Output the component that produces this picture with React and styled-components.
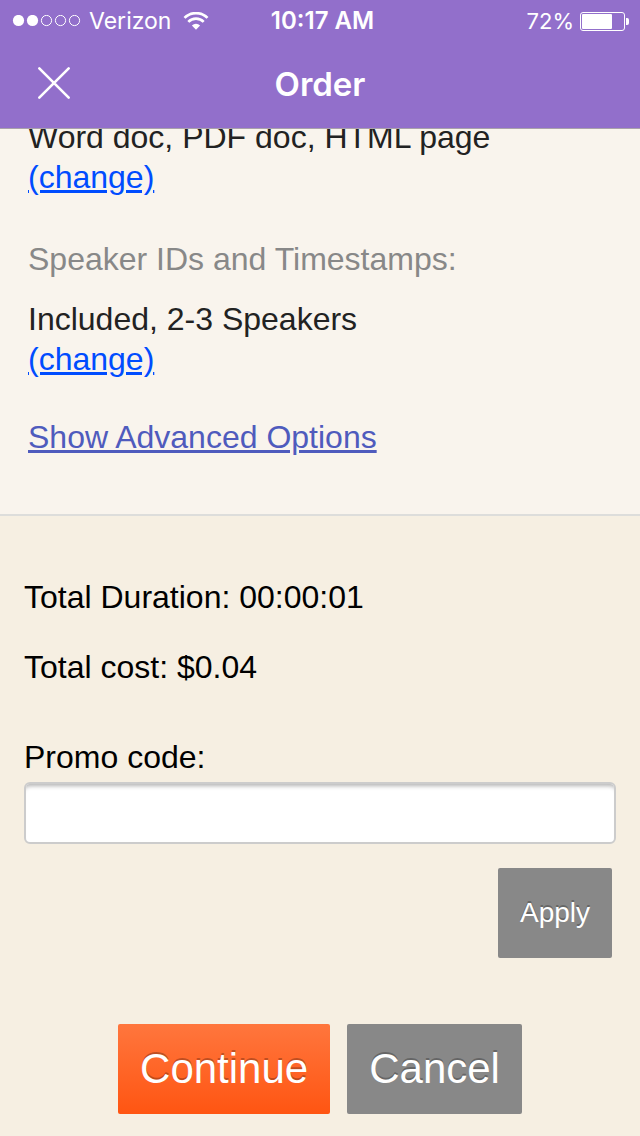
import React from "react";
import styled, { createGlobalStyle } from "styled-components";

const GlobalStyle = createGlobalStyle`
  * {
    box-sizing: border-box;
  }
  body {
    margin: 0;
    background-color: #f6efe2;
    font-family: "Liberation Sans", Arial, sans-serif;
    font-size: 32px;
    line-height: 40px;
    color: #000;
  }
`;

const Header = styled.header`
  position: sticky;
  top: 0;
  z-index: 1;
  background-color: #926fcb;
  border-bottom: 1px solid #a9a1ab;
  color: white;
  font-family: Inter, sans-serif;
`;

const StatusBar = styled.div`
  display: grid;
  grid-template-columns: 1fr auto 1fr;
  align-items: center;
  height: 42px;
  padding: 0 11px 0 12px;
  font-size: 23px;
`;

const StatusGroup = styled.div`
  display: flex;
  align-items: center;
  justify-content: ${props => (props.$end ? "flex-end" : "flex-start")};
  gap: ${props => (props.$end ? "6px" : "8px")};
`;

const Carrier = styled.span`
  padding-right: 4px;
`;

const Battery = styled.span`
  font-size: 22px;
`;

const Time = styled.span`
  padding-left: 4px;
  font-size: 24px;
  font-weight: 600;
`;

const NavBar = styled.div`
  display: grid;
  grid-template-columns: 1fr auto 1fr;
  align-items: center;
  height: 86px;
  padding: 0 36px 4px;
`;

const CloseButton = styled.button`
  display: flex;
  justify-self: start;
  padding: 0;
  border: none;
  background: none;
  color: inherit;
  cursor: pointer;
`;

const Title = styled.h1`
  margin: 0;
  padding-top: 2px;
  font-size: 33px;
  font-weight: 600;
`;

/* scrolled up a little, the first line sits partly under the header */
const Options = styled.section`
  margin-top: -12px;
  padding: 0 28px 57px;
  background-color: #f9f4ed;
  border-bottom: 2px solid #dddddb;
`;

const OptionLabel = styled.h2`
  margin: 42px 0 20px;
  font-size: 32px;
  font-weight: normal;
  color: #888;
`;

const OptionValue = styled.div`
  color: #222;
`;

const ChangeLink = styled.a`
  color: #004cff;
`;

const AdvancedLink = styled.a`
  display: inline-block;
  margin-top: 38px;
  color: #4f5bbd;
`;

const Summary = styled.form`
  display: flex;
  flex-direction: column;
  padding: 61px 24px 22px;
`;

const Total = styled.p`
  margin: 0 0 30px;
`;

const PromoLabel = styled.label`
  margin: 20px 0 5px;
`;

const PromoInput = styled.input`
  width: 100%;
  height: 62px;
  padding: 0 12px;
  border: 2px solid #ccc;
  border-radius: 6px;
  background-color: white;
  box-shadow: inset 0 6px 4px -4px rgba(0, 0, 0, 0.3);
  font: inherit;
`;

const Button = styled.button`
  height: 90px;
  padding: 0 22px;
  border: none;
  border-radius: 2px;
  background: ${props =>
    props.$primary ? "linear-gradient(#ff763d, #ff5512)" : "#888"};
  color: white;
  font-family: inherit;
  font-size: ${props => (props.$small ? "28px" : "42px")};
  text-shadow: 0 -2px 0 rgba(0, 0, 0, 0.25);
  cursor: pointer;
`;

const ApplyRow = styled.div`
  display: flex;
  justify-content: flex-end;
  padding: 24px 4px 66px;
`;

const Actions = styled.div`
  display: flex;
  justify-content: center;
  gap: 17px;
`;

const SignalDots = () => (
  <svg width="69" height="12" viewBox="0 0 69 12" aria-hidden="true">
    {[0, 1, 2, 3, 4].map(i => (
      <circle
        key={i}
        cx={6.5 + i * 14}
        cy="5.5"
        r={i < 2 ? 5.6 : 5.1}
        fill={i < 2 ? "white" : "none"}
        stroke={i < 2 ? "none" : "white"}
      />
    ))}
  </svg>
);

const WifiIcon = () => (
  <svg width="26" height="19" viewBox="0 0 26 19" aria-hidden="true">
    <g fill="none" stroke="white" strokeWidth="2.7">
      <path d="M1.5 5.9a16.3 16.3 0 0 1 23 0" />
      <path d="M5.3 9.9a10.9 10.9 0 0 1 15.4 0" />
    </g>
    <path d="M8.9 13.4a6 6 0 0 1 8.2 0L13 17.7z" fill="white" />
  </svg>
);

const BatteryIcon = () => (
  <svg width="49" height="19" viewBox="0 0 49 19" aria-hidden="true">
    <rect
      x="0.5"
      y="0.5"
      width="44"
      height="18"
      rx="2.5"
      fill="none"
      stroke="white"
    />
    <rect x="2" y="2" width="30" height="15" rx="1" fill="white" />
    <path d="M46 6h1.2q1.8 0 1.8 2v3q0 2-1.8 2H46z" fill="white" />
  </svg>
);

const CloseIcon = () => (
  <svg width="36" height="36" viewBox="0 0 36 36" aria-hidden="true">
    <path
      d="M3.3 3.3l29.4 29.4M32.7 3.3L3.3 32.7"
      stroke="white"
      strokeWidth="2.6"
      strokeLinecap="round"
    />
  </svg>
);

class App extends React.Component {
  state = {
    promo: ""
  };
  PromoHandler = e => {
    this.setState({ promo: e.target.value });
  };
  SubmitHandler = e => {
    e.preventDefault();
  };
  render() {
    return (
      <>
        <GlobalStyle />
        <Header>
          <StatusBar>
            <StatusGroup>
              <SignalDots />
              <Carrier>Verizon</Carrier>
              <WifiIcon />
            </StatusGroup>
            <Time>10:17 AM</Time>
            <StatusGroup $end>
              <Battery>72%</Battery>
              <BatteryIcon />
            </StatusGroup>
          </StatusBar>
          <NavBar>
            <CloseButton type="button" aria-label="Close">
              <CloseIcon />
            </CloseButton>
            <Title>Order</Title>
          </NavBar>
        </Header>
        <Options>
          <OptionValue>Word doc, PDF doc, HTML page</OptionValue>
          <ChangeLink href="#formats">(change)</ChangeLink>
          <OptionLabel>Speaker IDs and Timestamps:</OptionLabel>
          <OptionValue>Included, 2-3 Speakers</OptionValue>
          <ChangeLink href="#speakers">(change)</ChangeLink>
          <div>
            <AdvancedLink href="#advanced">Show Advanced Options</AdvancedLink>
          </div>
        </Options>
        <Summary onSubmit={this.SubmitHandler}>
          <Total>Total Duration: 00:00:01</Total>
          <Total>Total cost: $0.04</Total>
          <PromoLabel htmlFor="promo">Promo code:</PromoLabel>
          <PromoInput
            id="promo"
            type="text"
            value={this.state.promo}
            onChange={this.PromoHandler}
          />
          <ApplyRow>
            <Button type="button" $small>
              Apply
            </Button>
          </ApplyRow>
          <Actions>
            <Button type="submit" $primary>
              Continue
            </Button>
            <Button type="button">Cancel</Button>
          </Actions>
        </Summary>
      </>
    );
  }
}

export default App;
